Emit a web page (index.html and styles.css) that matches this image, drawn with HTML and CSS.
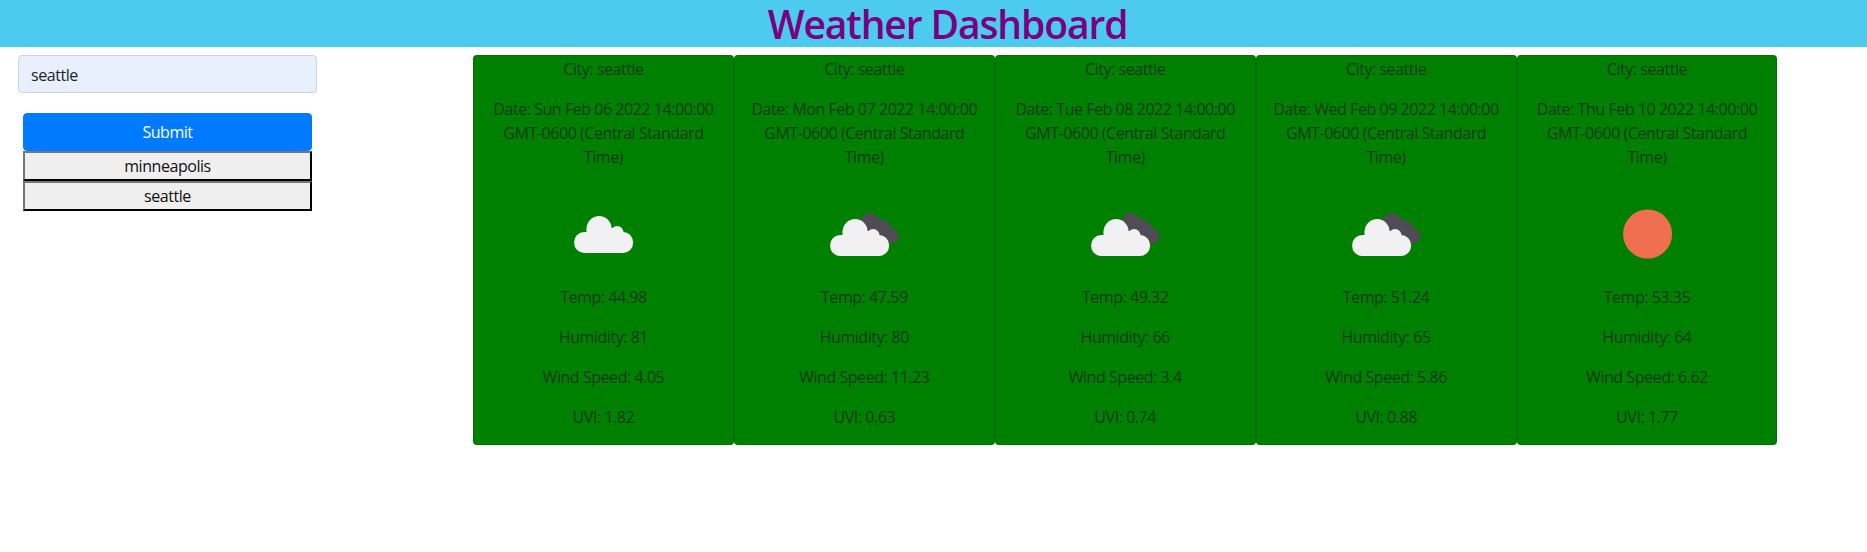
FILE: index.html
```html
<!DOCTYPE html>
<html lang="en">
<head>
<meta charset="utf-8">
<title>Weather Dashboard</title>
<link rel="stylesheet" href="styles.css">
</head>
<body>
<svg class="defs" width="0" height="0" aria-hidden="true">
  <defs>
    <g id="cloud">
      <rect x="20.5" y="48" width="59" height="21" rx="10"/>
      <circle cx="45.5" cy="44.5" r="12.5"/>
      <circle cx="63.5" cy="48.5" r="6.5"/>
      <rect x="33" y="44" width="30" height="10"/>
    </g>
    <g id="cloud-dark">
      <circle cx="55" cy="38.5" r="9.5"/>
      <circle cx="68" cy="44" r="8"/>
      <circle cx="76.5" cy="52" r="7.5"/>
      <path d="M50 31L62 33L72 39L83 50L80 58L72 60L50 50Z"/>
    </g>
  </defs>
</svg>
<header class="banner"><h1 class="title">Weather Dashboard</h1></header>
<main class="layout">
  <aside class="sidebar">
    <input class="city-input" type="text" value="seattle">
    <div class="actions">
      <button class="submit" type="button">Submit</button>
      <button class="history" type="button">minneapolis</button>
      <button class="history" type="button">seattle</button>
    </div>
  </aside>
  <section class="cards">
    <article class="card">
      <p>City: seattle</p>
      <p>Date: Sun Feb 06 2022 14:00:00 GMT-0600 (Central Standard Time)</p>
      <svg class="icon" viewBox="0 0 100 100"><use href="#cloud" class="white"/></svg>
      <p>Temp: 44.98</p><p>Humidity: 81</p><p>Wind Speed: 4.05</p><p>UVI: 1.82</p>
    </article>
    <article class="card">
      <p>City: seattle</p>
      <p>Date: Mon Feb 07 2022 14:00:00 GMT-0600 (Central Standard Time)</p>
      <svg class="icon" viewBox="0 0 100 100"><use href="#cloud-dark" class="dark"/><use href="#cloud" class="white" x="-5" y="3"/></svg>
      <p>Temp: 47.59</p><p>Humidity: 80</p><p>Wind Speed: 11.23</p><p>UVI: 0.63</p>
    </article>
    <article class="card">
      <p>City: seattle</p>
      <p>Date: Tue Feb 08 2022 14:00:00 GMT-0600 (Central Standard Time)</p>
      <svg class="icon" viewBox="0 0 100 100"><use href="#cloud-dark" class="dark"/><use href="#cloud" class="white" x="-5" y="3"/></svg>
      <p>Temp: 49.32</p><p>Humidity: 66</p><p>Wind Speed: 3.4</p><p>UVI: 0.74</p>
    </article>
    <article class="card">
      <p>City: seattle</p>
      <p>Date: Wed Feb 09 2022 14:00:00 GMT-0600 (Central Standard Time)</p>
      <svg class="icon" viewBox="0 0 100 100"><use href="#cloud-dark" class="dark"/><use href="#cloud" class="white" x="-5" y="3"/></svg>
      <p>Temp: 51.24</p><p>Humidity: 65</p><p>Wind Speed: 5.86</p><p>UVI: 0.88</p>
    </article>
    <article class="card">
      <p>City: seattle</p>
      <p>Date: Thu Feb 10 2022 14:00:00 GMT-0600 (Central Standard Time)</p>
      <svg class="icon" viewBox="0 0 100 100"><circle class="sun" cx="50" cy="50" r="24.5"/></svg>
      <p>Temp: 53.35</p><p>Humidity: 64</p><p>Wind Speed: 6.62</p><p>UVI: 1.77</p>
    </article>
  </section>
</main>
</body>
</html>
```
FILE: styles.css
```css
* { box-sizing: border-box; }
html, body { margin: 0; }
body {
  background: #fff;
  color: #212529;
  font-family: "Open Sans", "Noto Sans", sans-serif;
  font-size: 16px;
  line-height: 24px;
  letter-spacing: -0.45px;
}
.defs { display: block; height: 0; }
.banner {
  height: 47px;
  background: #4ccbee;
  padding-left: 28px;
  text-align: center;
}
.title {
  margin: 0;
  color: #7a007f;
  font-size: 39px;
  font-weight: 600;
  line-height: 47px;
  letter-spacing: -1.1px;
}
.layout {
  display: flex;
  padding: 8px 0 0 18px;
}
.sidebar { flex: 0 0 455px; }
.city-input {
  display: block;
  width: 299px;
  height: 38px;
  padding: 8px 12px 6px;
  border: 1px solid #ced4da;
  border-radius: 4px;
  background: #e8f0fe;
  color: #212529;
  font: inherit;
  letter-spacing: inherit;
}
.actions {
  display: flex;
  flex-direction: column;
  width: 289px;
  margin: 20px 0 0 5px;
}
.submit {
  height: 38px;
  border: 1px solid #007bff;
  border-radius: 4px;
  background: #007bff;
  color: #fff;
  font: inherit;
  letter-spacing: inherit;
}
.history {
  height: 30px;
  padding: 0;
  border: 2px outset #767676;
  border-color: #767676 #222 #222 #767676;
  background: #efefef;
  color: #111;
  font: inherit;
  letter-spacing: inherit;
}
.cards { display: flex; }
.card {
  flex: 0 0 260.88px;
  height: 390px;
  padding: 1px 15px 0;
  border: 1px solid rgba(0, 0, 0, 0.125);
  border-radius: 4px;
  background: #008000;
  color: #143a1c;
  text-align: center;
}
.card p { margin: 0 0 16px; }
.icon {
  display: block;
  width: 100px;
  height: 100px;
  margin: -1px auto 0;
  overflow: visible;
  transform: translateX(0.6px);
}
.card .icon + p { margin-top: 1px; }
.white { fill: #f1f1f3; }
.dark { fill: #4f4c55; }
.sun { fill: #ef6f50; }
```
